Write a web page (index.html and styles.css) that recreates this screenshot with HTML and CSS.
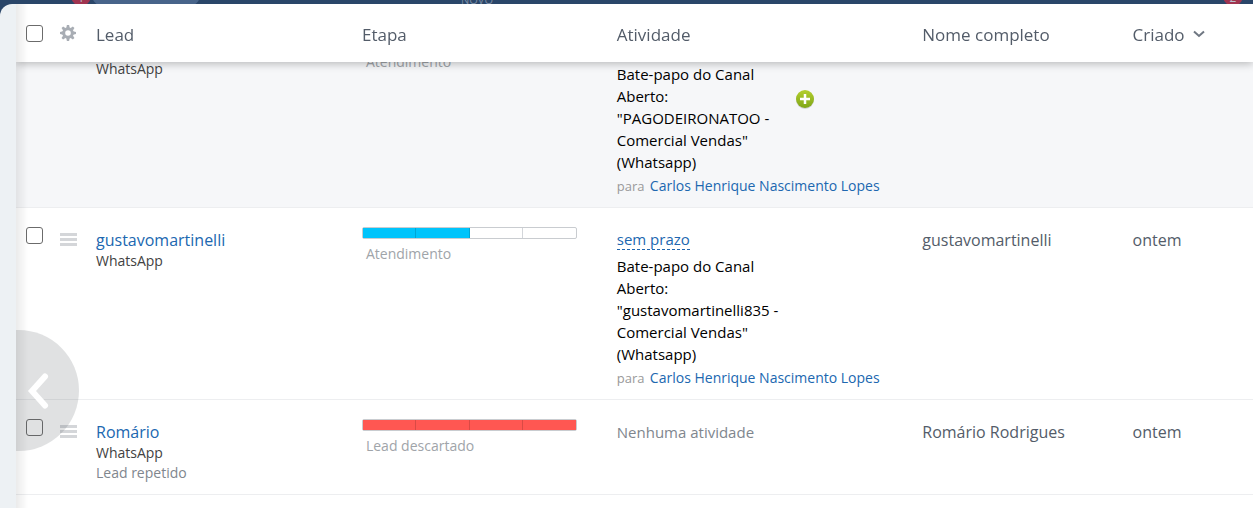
FILE: index.html
```html
<!DOCTYPE html>
<html lang="pt-BR">
<head>
  <meta charset="UTF-8" />
  <meta name="viewport" content="width=device-width, initial-scale=1.0"/>
  <title>Leads</title>
  <link rel="stylesheet" href="styles.css">
</head>
<body>
  <header class="topbar">
    <span class="badge badge-left">1</span>
    <span class="topbar-pill"></span>
    <span class="topbar-label">NOVO</span>
    <span class="badge badge-right">2</span>
  </header>

  <main class="panel">
    <div class="grid" id="leadGrid">
      <table class="leads">
        <colgroup>
          <col class="col-check">
          <col class="col-menu">
          <col class="col-lead">
          <col class="col-stage">
          <col class="col-activity">
          <col class="col-name">
          <col class="col-created">
        </colgroup>
        <thead>
          <tr>
            <th class="cell-check"><input type="checkbox" aria-label="Selecionar todos"></th>
            <th class="cell-menu">
              <button type="button" class="icon-btn" aria-label="Configurar colunas">
                <svg width="16" height="16" viewBox="0 0 16 16">
                  <g fill="#a8adb4">
                    <path fill-rule="evenodd" d="M8 2.200a5.800 5.800 0 1 0 0 11.600A5.800 5.800 0 0 0 8 2.200zm0 3a2.800 2.800 0 1 1 0 5.600 2.800 2.800 0 0 1 0-5.600z"/>
                    <path id="tooth" d="M6.900 0h2.200l.6 3H6.300z"/>
                    <use href="#tooth" transform="rotate(45 8 8)"/>
                    <use href="#tooth" transform="rotate(90 8 8)"/>
                    <use href="#tooth" transform="rotate(135 8 8)"/>
                    <use href="#tooth" transform="rotate(180 8 8)"/>
                    <use href="#tooth" transform="rotate(225 8 8)"/>
                    <use href="#tooth" transform="rotate(270 8 8)"/>
                    <use href="#tooth" transform="rotate(315 8 8)"/>
                  </g>
                </svg>
              </button>
            </th>
            <th class="head">Lead</th>
            <th class="head">Etapa</th>
            <th class="head">Atividade</th>
            <th class="head">Nome completo</th>
            <th class="head">
              <button type="button" class="sort-btn">Criado
                <svg width="12" height="8" viewBox="0 0 12 8"><path d="M1 1.500L6 6l5-4.500" fill="none" stroke="#6f7782" stroke-width="2"/></svg>
              </button>
            </th>
          </tr>
        </thead>
        <tbody>
          <tr class="row-hover">
            <td class="cell-check"><input type="checkbox" aria-label="Selecionar lead"></td>
            <td class="cell-menu"><button type="button" class="icon-btn burger" aria-label="Ações"><i></i><i></i><i></i></button></td>
            <td>
              <div class="source">WhatsApp</div>
            </td>
            <td class="cell-stage">
              <div class="stage-bar stage-blue"><i class="on"></i><i class="on"></i><i></i><i></i></div>
              <div class="stage-name">Atendimento</div>
            </td>
            <td>
              <div class="activity">
                <div class="activity-text">Bate-papo do Canal Aberto: "PAGODEIRONATOO - Comercial Vendas" (Whatsapp)</div>
                <button type="button" class="icon-btn add-btn" aria-label="Adicionar atividade">
                  <svg width="20" height="20" viewBox="0 0 20 20">
                    <defs>
                      <linearGradient id="green" x1="0" y1="0" x2="0" y2="1">
                        <stop offset="0" stop-color="#b4cf2e"/>
                        <stop offset="1" stop-color="#7fa618"/>
                      </linearGradient>
                    </defs>
                    <circle cx="10" cy="11" r="9" fill="#000" opacity=".15"/>
                    <circle cx="10" cy="10" r="9" fill="url(#green)"/>
                    <path d="M10 5v10M5 10h10" stroke="#fff" stroke-width="2.500"/>
                  </svg>
                </button>
              </div>
              <div class="assignee">para <a href="#">Carlos Henrique Nascimento Lopes</a></div>
            </td>
            <td></td>
            <td></td>
          </tr>
          <tr>
            <td class="cell-check"><input type="checkbox" aria-label="Selecionar gustavomartinelli"></td>
            <td class="cell-menu"><button type="button" class="icon-btn burger" aria-label="Ações"><i></i><i></i><i></i></button></td>
            <td>
              <a href="#" class="lead-name">gustavomartinelli</a>
              <div class="source">WhatsApp</div>
            </td>
            <td class="cell-stage">
              <div class="stage-bar stage-blue"><i class="on"></i><i class="on"></i><i></i><i></i></div>
              <div class="stage-name">Atendimento</div>
            </td>
            <td>
              <a href="#" class="deadline">sem prazo</a>
              <div class="activity">
                <div class="activity-text">Bate-papo do Canal Aberto: "gustavomartinelli835 - Comercial Vendas" (Whatsapp)</div>
              </div>
              <div class="assignee">para <a href="#">Carlos Henrique Nascimento Lopes</a></div>
            </td>
            <td class="plain">gustavomartinelli</td>
            <td class="plain">ontem</td>
          </tr>
          <tr>
            <td class="cell-check"><input type="checkbox" aria-label="Selecionar Romário"></td>
            <td class="cell-menu"><button type="button" class="icon-btn burger" aria-label="Ações"><i></i><i></i><i></i></button></td>
            <td>
              <a href="#" class="lead-name">Romário</a>
              <div class="source">WhatsApp</div>
              <div class="repeat">Lead repetido</div>
            </td>
            <td class="cell-stage">
              <div class="stage-bar stage-red"><i class="on"></i><i class="on"></i><i class="on"></i><i class="on"></i></div>
              <div class="stage-name">Lead descartado</div>
            </td>
            <td class="no-activity">Nenhuma atividade</td>
            <td class="plain">Romário Rodrigues</td>
            <td class="plain">ontem</td>
          </tr>
        </tbody>
      </table>
    </div>
    <div class="edge-shadow"></div>
    <div class="scroll-ear">
      <button type="button" class="scroll-left" aria-label="Rolar para a esquerda">
        <svg width="24" height="38" viewBox="0 0 24 38"><path d="M19 4.500L6 19l13 14.500" fill="none" stroke="#fff" stroke-width="6" stroke-linecap="round"/></svg>
      </button>
    </div>
  </main>

  <script>
    // start scrolled a little so the first row sits under the fixed header
    document.getElementById('leadGrid').scrollTop = 46;
  </script>
</body>
</html>
```
FILE: styles.css
```css
* {
  box-sizing: border-box;
}

html, body {
  margin: 0;
  height: 100%;
  font-family: 'Segoe UI', 'Open Sans', sans-serif;
  background-color: #2a4669;
  color: #535c69;
}

body {
  display: flex;
  flex-direction: column;
  overflow: hidden;
}

a {
  color: #2067b0;
  text-decoration: none;
}

button {
  font: inherit;
  color: inherit;
  background: none;
  border: none;
  padding: 0;
  cursor: pointer;
}

svg {
  display: block;
}

.topbar {
  display: flex;
  align-items: flex-end;
  height: 4px;
  padding: 0 10px 0 71px;
  overflow: hidden;
}

.badge {
  width: 20px;
  height: 20px;
  flex: none;
  margin-bottom: -2px;
  border-radius: 10px;
  background: #a03450;
  color: #b9bdca;
  font-size: 12px;
  line-height: 24px;
  text-align: center;
}

.topbar-pill {
  width: 110px;
  height: 32px;
  margin: 0 260px -4px 0;
  border-radius: 16px;
  background: #48648a;
}

.topbar-label {
  color: #7b8ca5;
  font-size: 11px;
  line-height: 8px;
}

.badge-right {
  margin-left: auto;
}

.panel {
  position: relative;
  flex: 1;
  min-height: 0;
  padding-left: 16px;
  border-top-left-radius: 12px;
  background: #edf1f4;
  overflow: hidden;
}

.grid {
  height: 100%;
  padding-bottom: 80px;
  background: #fff;
  overflow-y: auto;
  scrollbar-width: none;
}

.leads {
  width: 100%;
  table-layout: fixed;
  border-collapse: separate;
  border-spacing: 0;
}

.col-check { width: 34px; }
.col-menu { width: 30px; }
.col-lead { width: 21.5%; }
.col-stage { width: 20.6%; }
.col-activity { width: 24.7%; }
.col-name { width: 17%; }

thead {
  position: sticky;
  top: 0;
  z-index: 1;
  background: #fff;
  box-shadow: 0 2px 8px rgba(0, 0, 0, 0.25);
}

th {
  height: 58px;
  padding: 0 0 0 16px;
  font-weight: normal;
  text-align: left;
}

.head {
  padding-top: 2px;
  font-size: 17px;
}

td {
  height: 95px;
  padding: 21px 0 10px 16px;
  border-bottom: 1px solid #edeef0;
  vertical-align: top;
}

.row-hover td {
  padding-top: 43px;
  background: #f6f7f9;
}

.cell-check,
.cell-menu {
  padding-left: 10px;
}

td.cell-check,
td.cell-menu,
td.cell-stage {
  padding-top: 19px;
}

.row-hover .cell-check,
.row-hover .cell-menu {
  padding-left: 10px;
}

.row-hover .cell-check,
.row-hover .cell-menu,
.row-hover .cell-stage {
  padding-top: 19px;
}

.cell-check input {
  display: block;
  appearance: none;
  width: 17px;
  height: 17px;
  margin: 0;
  border: 1px solid #6b6b6b;
  border-radius: 3px;
  background: #fff;
}

.icon-btn {
  display: block;
}

.burger {
  display: flex;
  flex-direction: column;
  gap: 2px;
  width: 17px;
  padding-top: 6px;
}

.burger i {
  height: 3px;
  background: #d4d6d9;
}

.sort-btn {
  display: flex;
  align-items: center;
  gap: 8px;
}

.lead-name {
  display: block;
  font-size: 16px;
  line-height: 22px;
}

.source,
.repeat {
  font-size: 14px;
  line-height: 20px;
}

.source {
  color: #424242;
}

.repeat {
  color: #80868e;
}

.stage-bar {
  display: flex;
  width: 215px;
  height: 12px;
  border: 1px solid #c9ccd0;
  border-radius: 2px;
}

.stage-bar i {
  flex: 1;
  border-right: 1px solid #d3d6da;
}

.stage-bar i:last-child {
  border-right: none;
}

.stage-bar .on {
  border-color: rgba(0, 0, 0, 0.15);
}

.stage-blue .on {
  background: #00c4fb;
}

.stage-red .on {
  background: #ff5752;
}

.stage-name {
  margin-top: 5px;
  padding-left: 4px;
  color: #a0a4a9;
  font-size: 14px;
  line-height: 20px;
}

.deadline {
  display: inline-block;
  border-bottom: 1px dashed #2067b0;
  font-size: 15px;
  line-height: 20px;
  vertical-align: top;
}

.activity {
  display: flex;
  align-items: flex-start;
  gap: 6px;
  margin-top: 4px;
}

.activity-text {
  width: 172px;
  color: #000;
  font-size: 15px;
  line-height: 22px;
}

.add-btn {
  margin-top: 26px;
}

.assignee {
  margin-top: 2px;
  color: #999;
  font-size: 13px;
  line-height: 22px;
  white-space: nowrap;
}

.assignee a {
  margin-left: 2px;
  font-size: 14px;
}

.no-activity {
  color: #80868e;
  font-size: 15px;
  line-height: 22px;
}

.plain {
  font-size: 16px;
  line-height: 22px;
}

.edge-shadow {
  position: absolute;
  z-index: 2;
  top: 0;
  bottom: 0;
  left: 16px;
  width: 12px;
  background: linear-gradient(90deg, rgba(0, 0, 0, 0.08), transparent);
  pointer-events: none;
}

.scroll-ear {
  position: absolute;
  z-index: 3;
  top: 326px;
  left: 16px;
  width: 63px;
  height: 121px;
  overflow: hidden;
}

.scroll-left {
  display: flex;
  align-items: center;
  justify-content: flex-end;
  width: 121px;
  height: 121px;
  margin-left: -58px;
  padding-right: 29px;
  border-radius: 50%;
  background: rgba(83, 88, 95, 0.18);
}
```
